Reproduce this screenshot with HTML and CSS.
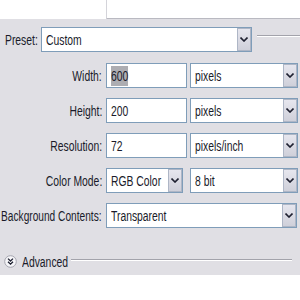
FILE: index.html
```html
<!DOCTYPE html>
<html lang="en">
<head>
    <meta charset="UTF-8">
    <title>New Document</title>
    <link rel="stylesheet" href="styles.css">
</head>
<body>
    <div class="top-box"></div>

    <div class="panel">
        <div class="preset-row">
            <span class="preset-label"><span class="txt">Preset:</span></span>
            <div class="select preset-select">
                <span class="value"><span class="txt">Custom</span></span>
                <span class="arrow"><svg width="8" height="5" viewBox="0 0 8 5"><path d="M0.5 0.5 L4 4 L7.5 0.5" fill="none" stroke="#1e2030" stroke-width="1.6"/></svg></span>
            </div>
            <div class="rule preset-rule"></div>
        </div>

        <div class="fields">
            <div class="row">
                <span class="label"><span class="txt">Width:</span></span>
                <div class="input"><span class="value"><span class="txt selected">600</span></span></div>
                <div class="select unit">
                    <span class="value"><span class="txt">pixels</span></span>
                    <span class="arrow"><svg width="8" height="5" viewBox="0 0 8 5"><path d="M0.5 0.5 L4 4 L7.5 0.5" fill="none" stroke="#1e2030" stroke-width="1.6"/></svg></span>
                </div>
            </div>
            <div class="row">
                <span class="label"><span class="txt">Height:</span></span>
                <div class="input"><span class="value"><span class="txt">200</span></span></div>
                <div class="select unit">
                    <span class="value"><span class="txt">pixels</span></span>
                    <span class="arrow"><svg width="8" height="5" viewBox="0 0 8 5"><path d="M0.5 0.5 L4 4 L7.5 0.5" fill="none" stroke="#1e2030" stroke-width="1.6"/></svg></span>
                </div>
            </div>
            <div class="row">
                <span class="label"><span class="txt">Resolution:</span></span>
                <div class="input"><span class="value"><span class="txt">72</span></span></div>
                <div class="select unit">
                    <span class="value"><span class="txt">pixels/inch</span></span>
                    <span class="arrow"><svg width="8" height="5" viewBox="0 0 8 5"><path d="M0.5 0.5 L4 4 L7.5 0.5" fill="none" stroke="#1e2030" stroke-width="1.6"/></svg></span>
                </div>
            </div>
            <div class="row">
                <span class="label"><span class="txt">Color Mode:</span></span>
                <div class="select mode">
                    <span class="value"><span class="txt">RGB Color</span></span>
                    <span class="arrow"><svg width="8" height="5" viewBox="0 0 8 5"><path d="M0.5 0.5 L4 4 L7.5 0.5" fill="none" stroke="#1e2030" stroke-width="1.6"/></svg></span>
                </div>
                <div class="select unit">
                    <span class="value"><span class="txt">8 bit</span></span>
                    <span class="arrow"><svg width="8" height="5" viewBox="0 0 8 5"><path d="M0.5 0.5 L4 4 L7.5 0.5" fill="none" stroke="#1e2030" stroke-width="1.6"/></svg></span>
                </div>
            </div>
            <div class="row">
                <span class="label"><span class="txt tight">Background Contents:</span></span>
                <div class="select wide">
                    <span class="value"><span class="txt">Transparent</span></span>
                    <span class="arrow"><svg width="8" height="5" viewBox="0 0 8 5"><path d="M0.5 0.5 L4 4 L7.5 0.5" fill="none" stroke="#1e2030" stroke-width="1.6"/></svg></span>
                </div>
            </div>
        </div>

        <div class="advanced">
            <svg class="toggle" width="13" height="13" viewBox="0 0 13 13">
                <circle cx="6.5" cy="6.5" r="5.8" fill="#f6f6f9" stroke="#a4a4ae" stroke-width="1"/>
                <path d="M4 3.6 L6.5 6 L9 3.6 M4 6.8 L6.5 9.2 L9 6.8" fill="none" stroke="#1e2030" stroke-width="1.3"/>
            </svg>
            <span class="advanced-text"><span class="txt">Advanced</span></span>
            <div class="rule advanced-rule"></div>
        </div>
    </div>
</body>
</html>
```

FILE: styles.css
```css
:root {
    --panel-bg: #e0dfe4;
    --field-border: #7f9db9;
    --text: #1a1b2a;
    --etch-dark: #a3a3ab;
}

* {
    margin: 0;
    padding: 0;
    box-sizing: border-box;
}

body {
    background: #ffffff;
    font-family: 'Liberation Sans', Arial, sans-serif;
    font-size: 14px;
    color: var(--text);
}

/* the dialog font is a tall narrow one, squeeze Arial to match */
.txt {
    display: inline-block;
    white-space: nowrap;
    transform: scaleX(0.74);
    transform-origin: left center;
}

.txt.tight {
    transform: scaleX(0.725);
}

.top-box {
    width: 194px;
    height: 20px;
    margin-left: 106px;
    border-left: 1px solid #d4d4da;
    border-bottom: 2px solid #b9b9c1;
}

.panel {
    height: 256px;
    margin-top: -1px;
    background-color: var(--panel-bg);
    padding-top: 8px;
}

/* preset line */
.preset-row {
    display: flex;
    height: 25px;
    padding-left: 5px;
    align-items: center;
}

.preset-label {
    width: 36px;
}

.preset-select {
    width: 211px;
}

.rule {
    height: 2px;
    border-top: 1px solid var(--etch-dark);
    border-bottom: 1px solid #ffffff;
}

.preset-rule {
    flex: 1;
    margin-left: 5px;
    align-self: flex-start;
    margin-top: 8px;
}

/* form fields */
.fields {
    display: flex;
    flex-direction: column;
    gap: 10px;
    margin-top: 11px;
}

.row {
    display: flex;
    align-items: center;
    height: 25px;
}

.label {
    width: 102px;
    margin-right: 4px;
    display: flex;
    justify-content: flex-end;
}

.label .txt {
    transform-origin: right center;
}

.input,
.select {
    display: flex;
    align-items: stretch;
    height: 25px;
    background: #ffffff;
    border: 1px solid var(--field-border);
}

.input {
    width: 81px;
    margin-right: 3px;
}

.value {
    flex: 1;
    display: flex;
    align-items: center;
    padding-left: 4px;
    overflow: hidden;
}

.selected {
    background: #adadb2;
    padding: 2px 0;
}

.arrow {
    width: 14px;
    display: flex;
    align-items: center;
    justify-content: center;
    background: linear-gradient(#e6e6ee, #cfd0da);
    border: 1px solid #aeb6c6;
}

.unit {
    width: 108px;
}

.mode {
    width: 77px;
    margin-right: 7px;
}

.wide {
    width: 191px;
}

/* advanced toggle */
.advanced {
    display: flex;
    align-items: center;
    height: 13px;
    margin-top: 27px;
    padding-left: 4px;
    padding-right: 8px;
}

.advanced-text {
    margin-left: 5px;
    width: 45px;
}

.advanced-rule {
    flex: 1;
    margin-left: 4px;
    margin-top: -3px;
}
```
